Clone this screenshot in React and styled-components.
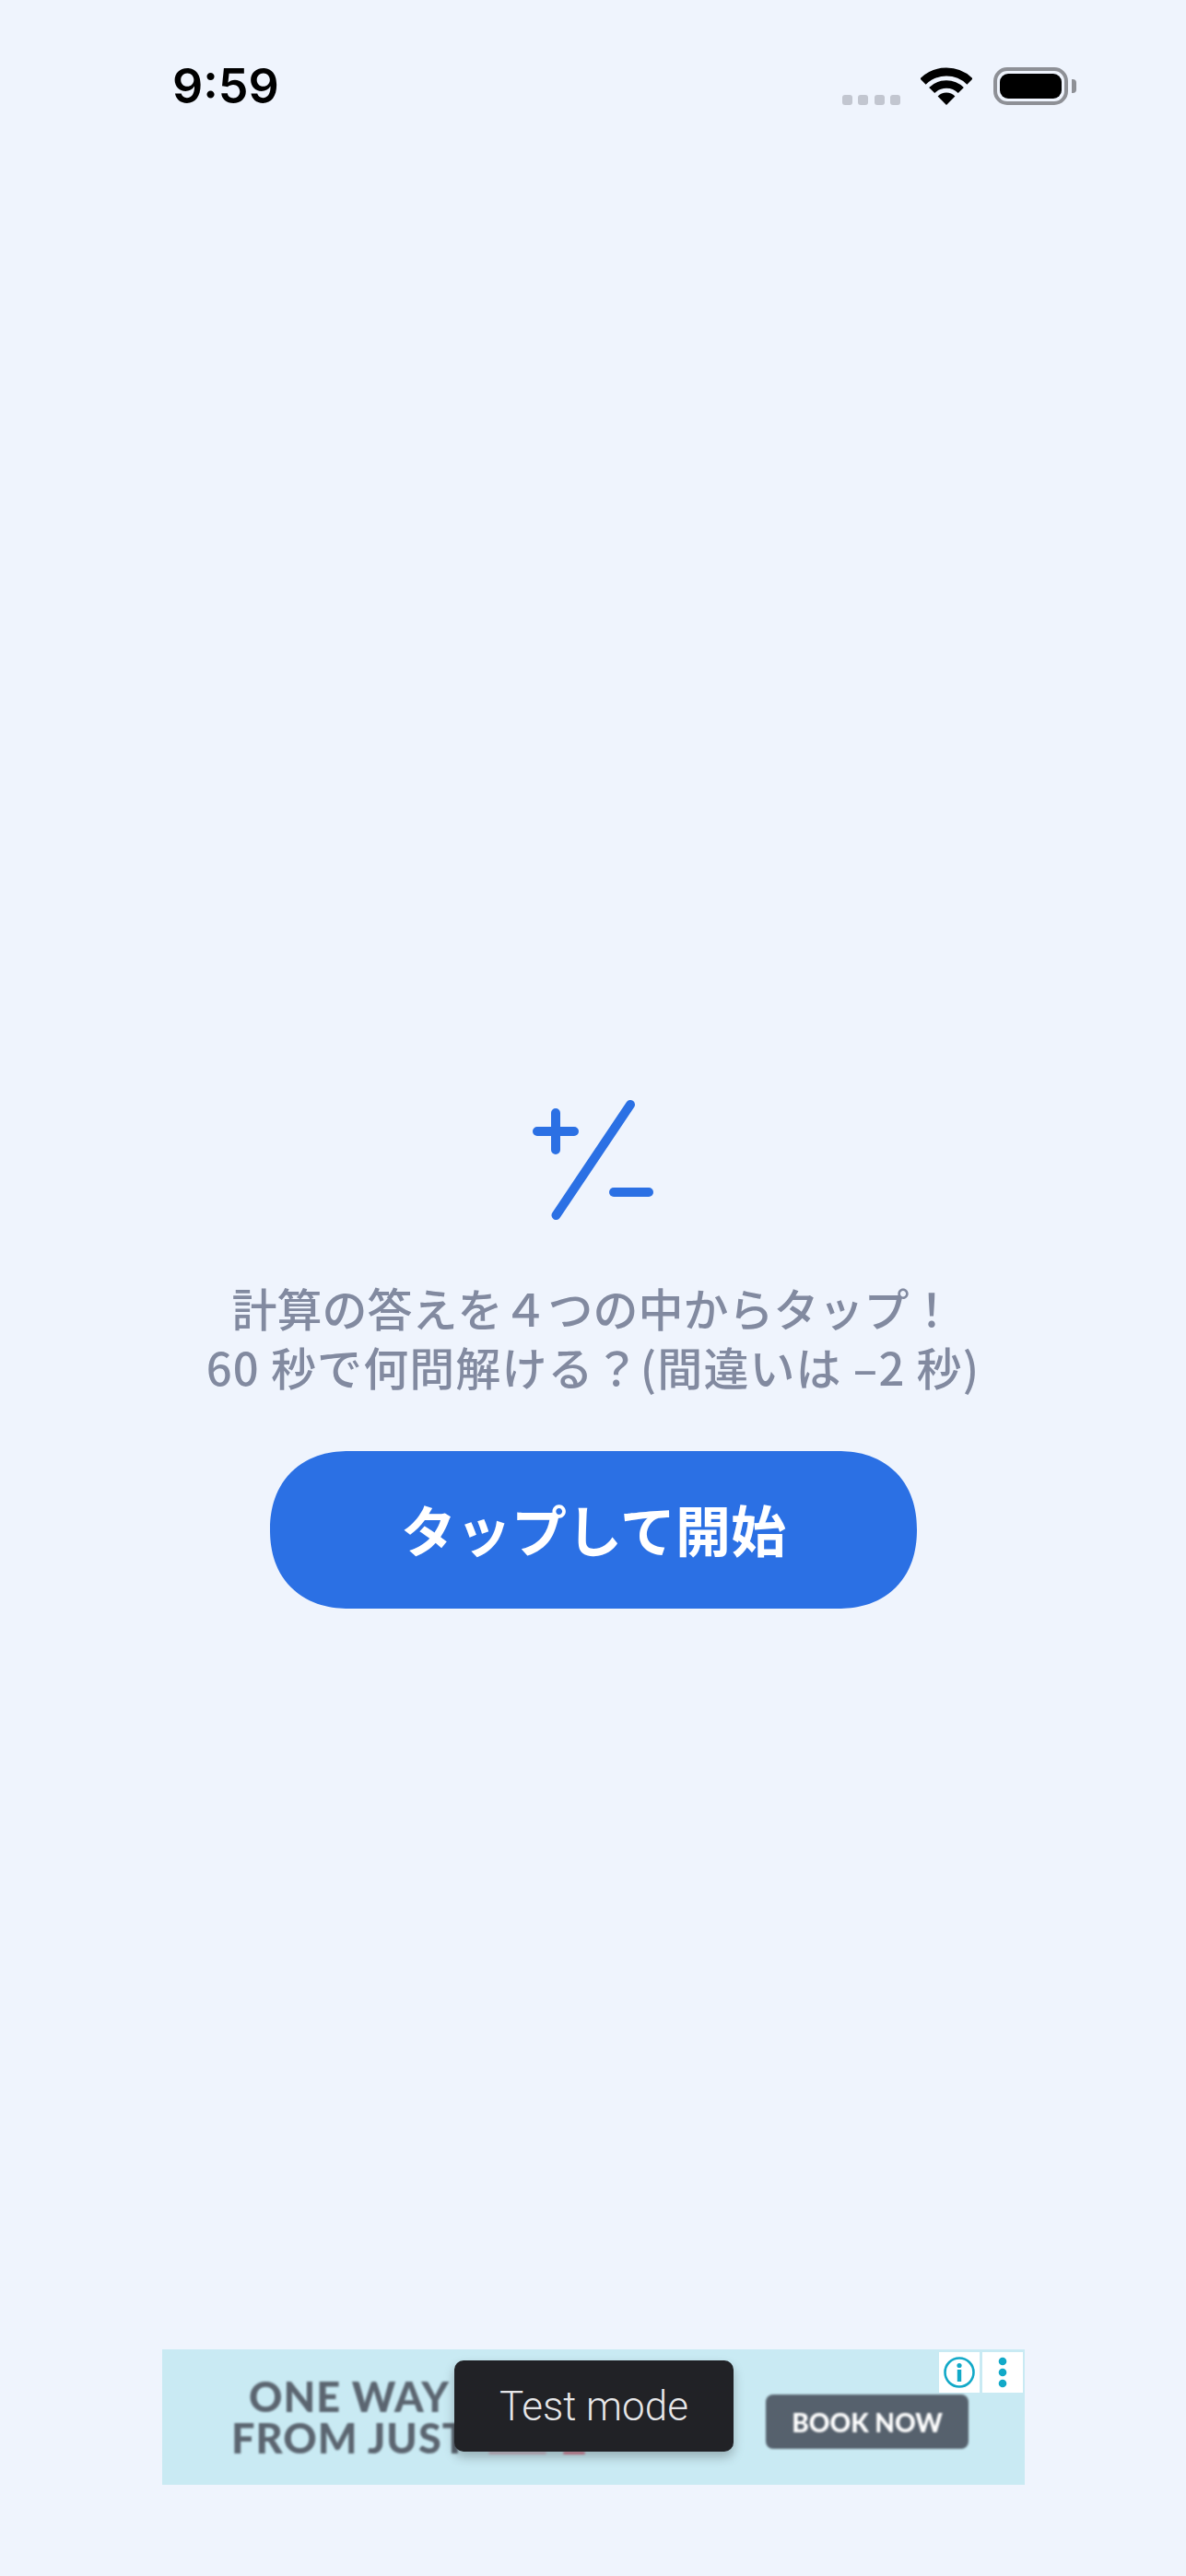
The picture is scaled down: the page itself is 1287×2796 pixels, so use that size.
import React from "react";
import styled, { createGlobalStyle } from "styled-components";

const GlobalStyle = createGlobalStyle`
  html, body {
    margin: 0;
    padding: 0;
    background-color: #eff4fd;
  }
  body {
    font-family: "Noto Sans CJK JP", "Noto Sans", sans-serif;
  }
`;

const Page = styled.div`
  width: 1287px;
  height: 2796px;
  display: flex;
  flex-direction: column;
  box-sizing: border-box;
  background-color: #eff4fd;
  overflow: hidden;
`;

// status bar ---------------------
const StatusBar = styled.div`
  height: 130px;
  box-sizing: border-box;
  padding: 73px 119px 0 187px;
  display: flex;
  justify-content: space-between;
  align-items: flex-start;
`;

const Clock = styled.div`
  font-family: Inter, "Liberation Sans", sans-serif;
  font-size: 52px;
  font-weight: 600;
  line-height: 42px;
  color: #000;
`;

const StatusIcons = styled.div`
  display: flex;
  align-items: flex-start;
`;

const SignalDots = styled.div`
  display: flex;
  gap: 6.5px;
  margin: 30px 22px 0 0;
`;

const SignalDot = styled.span`
  width: 11px;
  height: 11px;
  border-radius: 3px;
  background-color: #c2c6d0;
`;

const WifiIcon = styled.svg`
  width: 56px;
  height: 41px;
  margin-right: 23px;
`;

const Battery = styled.div`
  width: 81px;
  height: 41px;
  box-sizing: border-box;
  border: 4px solid #8e9096;
  border-radius: 15px;
  padding: 3px;
  display: flex;
`;

const BatteryFill = styled.div`
  flex: 1;
  border-radius: 9px;
  background-color: #000;
`;

const BatteryNub = styled.div`
  width: 5px;
  height: 15px;
  margin: 13px 0 0 4px;
  border-radius: 0 4px 4px 0;
  background-color: #8e9096;
`;

// main content -------------------
const Main = styled.main`
  flex: 1;
  padding-top: 1064px;
  display: flex;
  flex-direction: column;
  align-items: center;
`;

const Logo = styled.svg`
  width: 140px;
  height: 140px;
  margin-left: 4px;
`;

const Description = styled.p`
  margin: 53px 0 0;
  font-size: 49px;
  font-weight: 500;
  line-height: 64px;
  text-align: center;
  white-space: nowrap;
  color: #828aa0;
`;

const DescriptionLine = styled.span`
  display: block;
  letter-spacing: ${(p) => p.$spacing || 0}px;
`;

const StartButton = styled.button`
  width: 702px;
  height: 171px;
  margin: 60px 0 0 1px;
  border: none;
  border-radius: 86px;
  corner-shape: superellipse(1.15);
  background-color: #2b70e4;
  color: #fff;
  font-family: inherit;
  font-size: 60px;
  font-weight: 700;
  padding: 0 0 4px;
`;

// ad banner ----------------------
const AdBanner = styled.div`
  position: relative;
  width: 936px;
  height: 147px;
  margin: 0 0 99px 176px;
  box-sizing: border-box;
  padding: 0 61px 0 75px;
  display: flex;
  justify-content: space-between;
  align-items: center;
  background-color: #c9eaf3;
`;

const AdCopy = styled.div`
  display: flex;
  flex-direction: column;
  filter: blur(1.2px);
`;

const AdLine = styled.div`
  font-family: Lato, "Liberation Sans", sans-serif;
  font-size: 45px;
  font-weight: 900;
  letter-spacing: 1px;
  line-height: 45px;
  white-space: nowrap;
  color: #5b6570;
  margin-left: ${(p) => p.$indent || 0}px;
`;

const AdRedMark = styled.span`
  position: absolute;
  top: 111px;
  left: ${(p) => p.$left}px;
  width: ${(p) => p.$width}px;
  height: 3px;
  border-radius: 2px;
  background-color: #d8506c;
  opacity: ${(p) => p.$opacity};
  filter: blur(1px);
`;

const BookNow = styled.div`
  width: 220px;
  height: 59px;
  margin-top: 10px;
  display: flex;
  align-items: center;
  justify-content: center;
  border-radius: 8px;
  background-color: #56616d;
  font-family: Lato, "Liberation Sans", sans-serif;
  font-size: 28px;
  font-weight: 900;
  color: #fff;
  filter: blur(0.8px);
`;

const AdControls = styled.div`
  position: absolute;
  top: 3px;
  right: 2px;
  display: flex;
  gap: 3px;
`;

const AdControl = styled.div`
  width: 44px;
  height: 44px;
  display: flex;
  align-items: center;
  justify-content: center;
  background-color: #fff;
`;

const ControlIcon = styled.svg`
  width: 36px;
  height: 36px;
`;

const Toast = styled.div`
  position: absolute;
  top: 12px;
  left: 317px;
  width: 303px;
  height: 99px;
  display: flex;
  align-items: center;
  justify-content: center;
  border-radius: 10px;
  background-color: #212226;
  box-shadow: 0 6px 12px rgba(0, 0, 0, 0.25);
  font-family: Roboto, sans-serif;
  font-size: 44px;
  font-weight: 300;
  color: #e6e6e8;
`;

export default function App() {
  return (
    <Page>
      <GlobalStyle />
      <StatusBar>
        <Clock>9:59</Clock>
        <StatusIcons>
          <SignalDots>
            <SignalDot />
            <SignalDot />
            <SignalDot />
            <SignalDot />
          </SignalDots>
          <WifiIcon viewBox="0 0 56 41">
            <path d="M2.5 15.5 A36.5 36.5 0 0 1 53.5 15.5" fill="none" stroke="#000" strokeWidth="9" />
            <path d="M12.2 25 A22.5 22.5 0 0 1 43.8 25" fill="none" stroke="#000" strokeWidth="8.7" />
            <path d="M28 41 L18.6 31.6 A13 13 0 0 1 37.4 31.6 Z" fill="#000" />
          </WifiIcon>
          <Battery>
            <BatteryFill />
          </Battery>
          <BatteryNub />
        </StatusIcons>
      </StatusBar>

      <Main>
        <Logo viewBox="0 0 140 140">
          <g fill="none" stroke="#2b70e4" strokeWidth="10" strokeLinecap="round">
            <path d="M7 34 H47 M27 14 V54" />
            <path d="M108 5 L27.5 125" />
            <path d="M90 100 H128" />
          </g>
        </Logo>
        <Description>
          <DescriptionLine>計算の答えを４つの中からタップ！</DescriptionLine>
          <DescriptionLine $spacing={1.1}>60 秒で何問解ける？(間違いは –2 秒)</DescriptionLine>
        </Description>
        <StartButton>タップして開始</StartButton>
      </Main>

      <AdBanner>
        <AdCopy>
          <AdLine $indent={19}>ONE WAY</AdLine>
          <AdLine>FROM JUST</AdLine>
        </AdCopy>
        <AdRedMark $left={354} $width={63} $opacity={0.3} />
        <AdRedMark $left={435} $width={24} $opacity={0.7} />
        <BookNow>BOOK NOW</BookNow>
        <AdControls>
          <AdControl>
            <ControlIcon viewBox="0 0 36 36">
              <circle cx="18" cy="18" r="15.5" fill="none" stroke="#12a9c8" strokeWidth="2.6" />
              <circle cx="18" cy="10.5" r="2.6" fill="#12a9c8" />
              <rect x="15.8" y="15" width="4.4" height="13" fill="#12a9c8" />
            </ControlIcon>
          </AdControl>
          <AdControl>
            <ControlIcon viewBox="0 0 36 36">
              <circle cx="18" cy="6" r="4.3" fill="#12a9c8" />
              <circle cx="18" cy="18" r="4.3" fill="#12a9c8" />
              <circle cx="18" cy="30" r="4.3" fill="#12a9c8" />
            </ControlIcon>
          </AdControl>
        </AdControls>
        <Toast>Test mode</Toast>
      </AdBanner>
    </Page>
  );
}
